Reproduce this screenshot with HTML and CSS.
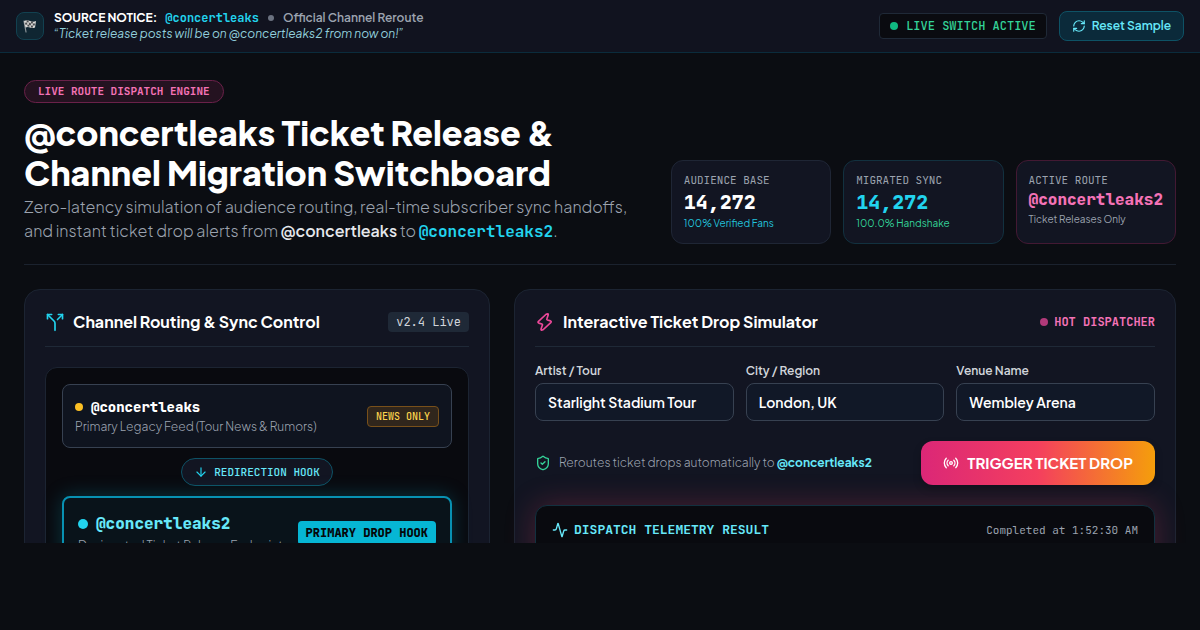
FILE: index.html
```
<!DOCTYPE html>
<html lang="en">
<head>
    <meta charset="UTF-8">
    <meta name="viewport" content="width=device-width, initial-scale=1.0">
    <title>@concertleaks Channel Migration Switchboard</title>
    <link rel="stylesheet" href="styles.css">
</head>
<body>
<div class="app">

    <!-- Source notice bar -->
    <header class="notice">
        <div class="notice-left">
            <div class="notice-icon">
                <svg width="16" height="16" viewBox="0 0 16 16">
                    <path d="M2 3l2 11" stroke="#8b9499" stroke-width="1.2" stroke-linecap="round"/>
                    <path d="M2 3q3-1.500 6 0t6 0l-1 6.500q-3 1-5 0t-4.500 0z" fill="#d9d9d6"/>
                    <path d="M4.500 2.300l2 .2.300 2-2-.2zM9 3.400l2 .2-.2 2-2-.2zM3 4.700l2-.3.400 2-2 .3zM7 4.600l2 .8-.2 2-2-.8zM11 5.500l2-.1-.3 2-2 .1zM5.300 6.500l2 .2.200 2-2-.2zM9 7.500l2 .2-.3 2-1.900-.3z" fill="#4a4d50"/>
                </svg>
            </div>
            <div>
                <p class="notice-title"><strong>SOURCE NOTICE:</strong> <span class="mono handle">@concertleaks</span> <i class="sep"></i> <span class="reroute">Official Channel Reroute</span></p>
                <p class="notice-quote">“Ticket release posts will be on @concertleaks2 from now on!”</p>
            </div>
        </div>
        <div class="notice-right">
            <span class="live-switch mono"><i class="dot green"></i>LIVE SWITCH ACTIVE</span>
            <button type="button" class="reset">
                <svg class="icon" width="14" height="14" viewBox="0 0 24 24"><path d="M3 12a9 9 0 0 1 9-9 9.750 9.750 0 0 1 6.740 2.740L21 8"/><path d="M21 3v5h-5"/><path d="M21 12a9 9 0 0 1-9 9 9.750 9.750 0 0 1-6.740-2.740L3 16"/><path d="M8 16H3v5"/></svg>
                Reset Sample
            </button>
        </div>
    </header>

    <main>
        <!-- Hero -->
        <section class="hero">
            <div class="hero-text">
                <span class="engine mono">LIVE ROUTE DISPATCH ENGINE</span>
                <h1>@concertleaks Ticket Release &amp;<br>Channel Migration Switchboard</h1>
                <p>Zero-latency simulation of audience routing, real-time subscriber sync handoffs,<br>and instant ticket drop alerts from <strong>@concertleaks</strong> to <b class="mono">@concertleaks2</b>.</p>
            </div>
            <div class="stats">
                <div class="stat">
                    <span class="stat-label mono">AUDIENCE BASE</span>
                    <span class="stat-value mono">14,272</span>
                    <span class="stat-note cyan">100% Verified Fans</span>
                </div>
                <div class="stat stat-cyan">
                    <span class="stat-label mono">MIGRATED SYNC</span>
                    <span class="stat-value mono">14,272</span>
                    <span class="stat-note emerald">100.0% Handshake</span>
                </div>
                <div class="stat stat-pink">
                    <span class="stat-label mono">ACTIVE ROUTE</span>
                    <span class="stat-value stat-route mono">@concertleaks2</span>
                    <span class="stat-note">Ticket Releases Only</span>
                </div>
            </div>
        </section>

        <div class="panels">
            <!-- Channel routing -->
            <section class="panel routing">
                <div class="panel-head">
                    <h2>
                        <svg class="icon cyan-icon" width="20" height="20" viewBox="0 0 24 24"><path d="M16 3h5v5"/><path d="M8 3H3v5"/><path d="M12 22v-8.300a4 4 0 0 0-1.172-2.872L3 3"/><path d="m15 9 6-6"/></svg>
                        Channel Routing &amp; Sync Control
                    </h2>
                    <span class="version mono">v2.4 Live</span>
                </div>
                <div class="flow">
                    <div class="node">
                        <div>
                            <div class="node-name mono"><i class="dot amber"></i>@concertleaks</div>
                            <div class="node-desc">Primary Legacy Feed (Tour News &amp; Rumors)</div>
                        </div>
                        <span class="tag-news mono">NEWS ONLY</span>
                    </div>
                    <div class="hook mono">
                        <svg class="icon" width="14" height="14" viewBox="0 0 24 24"><path d="M12 5v14"/><path d="m19 12-7 7-7-7"/></svg>
                        REDIRECTION HOOK
                    </div>
                    <div class="node node-primary">
                        <div>
                            <div class="node-name mono"><i class="dot"></i>@concertleaks2</div>
                            <div class="node-desc">Designated Ticket Release Endpoint</div>
                        </div>
                        <span class="tag-primary mono">PRIMARY DROP HOOK</span>
                    </div>
                </div>
            </section>

            <!-- Ticket drop simulator -->
            <section class="panel simulator">
                <div class="panel-head">
                    <h2>
                        <svg class="icon pink-icon" width="20" height="20" viewBox="0 0 24 24"><path d="M13.300 2.700L4.200 11.200Q2.900 12.500 4.600 13.300L8.200 14.400Q9.300 14.900 8.800 16L7.200 20.600Q7 22.500 9.700 21.300L18.900 12.800Q20.200 11.500 18.500 10.700L14.900 9.600Q13.800 9.100 14.300 8L15.900 3.400Q16.100 1.500 13.300 2.700z"/></svg>
                        Interactive Ticket Drop Simulator
                    </h2>
                    <span class="hot mono"><i class="dot"></i>HOT DISPATCHER</span>
                </div>
                <form id="dropForm" action="#">
                    <div class="fields">
                        <div class="field">
                            <label for="artist">Artist / Tour</label>
                            <input type="text" id="artist" name="artist" value="Starlight Stadium Tour">
                        </div>
                        <div class="field">
                            <label for="city">City / Region</label>
                            <input type="text" id="city" name="city" value="London, UK">
                        </div>
                        <div class="field">
                            <label for="venue">Venue Name</label>
                            <input type="text" id="venue" name="venue" value="Wembley Arena">
                        </div>
                    </div>
                    <div class="dispatch">
                        <p>
                            <svg class="icon" width="16" height="16" viewBox="0 0 24 24"><path d="M20 13c0 5-3.500 7.500-7.660 8.950a1 1 0 0 1-.670-.010C7.500 20.500 4 18 4 13V6a1 1 0 0 1 1-1c2 0 4.500-1.200 6.240-2.720a1.170 1.170 0 0 1 1.520 0C14.510 3.810 17 5 19 5a1 1 0 0 1 1 1z"/><path d="m9 12 2 2 4-4"/></svg>
                            <span>Reroutes ticket drops automatically to <strong>@concertleaks2</strong></span>
                        </p>
                        <button type="submit" class="trigger">
                            <svg class="icon" width="16" height="16" viewBox="0 0 24 24"><path d="M4.900 19.100C1 15.200 1 8.800 4.900 4.900"/><path d="M7.800 16.200c-2.300-2.300-2.300-6.100 0-8.500"/><circle cx="12" cy="12" r="2"/><path d="M16.200 7.800c2.300 2.300 2.300 6.100 0 8.500"/><path d="M19.100 4.900C23 8.800 23 15.100 19.100 19"/></svg>
                            TRIGGER TICKET DROP
                        </button>
                    </div>
                </form>
                <div class="telemetry mono">
                    <h3>
                        <svg class="icon" width="16" height="16" viewBox="0 0 24 24"><path d="M22 12h-2.480a2 2 0 0 0-1.930 1.460l-2.350 8.360a.25.25 0 0 1-.480 0L9.240 2.180a.25.25 0 0 0-.480 0l-2.350 8.360A2 2 0 0 1 4.490 12H2"/></svg>
                        DISPATCH TELEMETRY RESULT
                    </h3>
                    <span>Completed at 1:52:30 AM</span>
                </div>
            </section>
        </div>
    </main>

</div>
</body>
</html>
```
FILE: styles.css
```
* {
    box-sizing: border-box;
}

body, h1, h2, h3, p {
    margin: 0;
}

body {
    font-family: "Plus Jakarta Sans", Inter, sans-serif;
    font-size: 14px;
    line-height: 20px;
    color: #f3f4f6;
    background-color: #0b0d12;
}

.app {
    max-height: calc(100vh - 87px);
    overflow: hidden;
}

.mono {
    font-family: "JetBrains Mono", "DejaVu Sans Mono", monospace;
}

.icon {
    flex: none;
    fill: none;
    stroke: currentColor;
    stroke-width: 2;
    stroke-linecap: round;
    stroke-linejoin: round;
}

.dot {
    flex: none;
    width: 8px;
    height: 8px;
    border-radius: 50%;
    background-color: #22d3ee;
}

.dot.green {
    background-color: #10b981;
}

.dot.amber {
    background-color: #fbbf24;
}

/* Notice bar */
.notice {
    display: flex;
    justify-content: space-between;
    align-items: center;
    padding: 10px 16px;
    background-color: #11131f;
    border-bottom: 1px solid #0b2c3c;
}

.notice-left, .notice-right {
    display: flex;
    align-items: center;
    gap: 10px;
}

.notice-right {
    gap: 12px;
}

.notice-icon {
    display: flex;
    align-items: center;
    justify-content: center;
    width: 28px;
    height: 28px;
    border: 1px solid #124150;
    border-radius: 8px;
    background-color: #0f2632;
}

.notice-title {
    display: flex;
    align-items: center;
    gap: 8px;
    font-size: 12px;
    line-height: 16px;
}

.notice-title strong {
    color: #fff;
}

.handle {
    font-weight: 700;
    color: #22d3ee;
}

.sep {
    width: 6px;
    height: 6px;
    margin: 0 1px;
    border-radius: 50%;
    background-color: #6b7280;
}

.reroute {
    font-weight: 600;
    color: #9ca3af;
}

.notice-quote {
    font-size: 12px;
    line-height: 16px;
    font-style: italic;
    color: #91cfdc;
}

.live-switch {
    display: flex;
    align-items: center;
    gap: 8px;
    padding: 4px 10px;
    font-size: 12px;
    line-height: 16px;
    font-weight: 500;
    color: #34d399;
    background-color: #0a0b10;
    border: 1px solid #1f2937;
    border-radius: 4px;
}

.reset {
    display: flex;
    align-items: center;
    gap: 6px;
    padding: 6px 12px;
    font-family: inherit;
    font-size: 12px;
    line-height: 16px;
    font-weight: 600;
    color: #67e8f9;
    background-color: #0b2a3a;
    border: 1px solid #0e5265;
    border-radius: 8px;
}

/* Hero */
main {
    padding: 27px 24px;
}

.hero {
    display: flex;
    justify-content: space-between;
    align-items: flex-end;
    padding-bottom: 20px;
    border-bottom: 1px solid #1b222e;
}

.engine {
    display: block;
    width: fit-content;
    padding: 3px 13px;
    font-size: 11px;
    line-height: 15px;
    font-weight: 700;
    color: #f472b6;
    background-color: #241220;
    border: 1px solid #6a2149;
    border-radius: 12px;
}

h1 {
    margin-top: 10px;
    font-size: 34px;
    line-height: 40px;
    font-weight: 800;
    color: #fff;
}

.hero-text p {
    margin-top: 2px;
    font-size: 16px;
    line-height: 24px;
    font-weight: 300;
    color: #9ca3af;
}

.hero-text strong {
    font-weight: 600;
    color: #e5e7eb;
}

.hero-text b {
    font-weight: 700;
    color: #22d3ee;
}

.stats {
    display: grid;
    grid-template-columns: repeat(3, 1fr);
    gap: 12px;
}

.stat {
    display: flex;
    flex-direction: column;
    padding: 12px;
    background-color: #121522;
    border: 1px solid #1f2635;
    border-radius: 12px;
}

.stat-cyan {
    border-color: #12313f;
}

.stat-pink {
    border-color: #431933;
}

.stat-label {
    font-size: 11px;
    line-height: 15px;
    color: #9ca3af;
}

.stat-value {
    font-size: 20px;
    line-height: 28px;
    font-weight: 800;
    color: #fff;
}

.stat-cyan .stat-value {
    color: #22d3ee;
}

.stat-pink .stat-route {
    font-size: 16px;
    line-height: 24px;
    color: #f472b6;
}

.stat-note {
    font-size: 10px;
    line-height: 15px;
    color: #9ca3af;
}

.stat-note.cyan {
    color: #22c3dc;
}

.stat-note.emerald {
    color: #34d399;
}

/* Panels */
.panels {
    display: grid;
    grid-template-columns: repeat(12, 1fr);
    gap: 24px;
    margin-top: 24px;
}

.panel {
    padding: 20px;
    background-color: #121522;
    border: 1px solid #1c2432;
    border-radius: 16px;
}

.routing {
    grid-column: span 5;
}

.simulator {
    grid-column: span 7;
}

.panel-head {
    display: flex;
    justify-content: space-between;
    align-items: center;
    padding-bottom: 12px;
    border-bottom: 1px solid #1f2937;
}

h2 {
    display: flex;
    align-items: center;
    gap: 8px;
    font-size: 16px;
    line-height: 24px;
    font-weight: 700;
    color: #fff;
}

.cyan-icon {
    color: #22d3ee;
}

.pink-icon {
    color: #ec4899;
}

.version {
    padding: 2px 8px;
    font-size: 12px;
    line-height: 16px;
    color: #d1d5db;
    background-color: #1f2937;
    border-radius: 4px;
}

.flow {
    margin-top: 20px;
    padding: 16px;
    background-color: #090a0f;
    border: 1px solid #1c2432;
    border-radius: 12px;
}

.node {
    display: flex;
    justify-content: space-between;
    align-items: center;
    padding: 12px;
    background-color: #0f141f;
    border: 1px solid #374151;
    border-radius: 8px;
}

.node-name {
    display: flex;
    align-items: center;
    gap: 8px;
    font-size: 14px;
    line-height: 20px;
    font-weight: 800;
    color: #fff;
}

.node-desc {
    margin-top: 2px;
    font-size: 12px;
    line-height: 16px;
    font-weight: 300;
    color: #9ca3af;
}

.tag-news {
    padding: 2px 8px;
    font-size: 10px;
    line-height: 15px;
    font-weight: 500;
    color: #fcd34d;
    background-color: #30261c;
    border: 1px solid #78501a;
    border-radius: 4px;
}

.hook {
    display: flex;
    align-items: center;
    gap: 6px;
    width: fit-content;
    margin: 10px auto;
    padding: 5px 12px;
    font-size: 11px;
    line-height: 16px;
    font-weight: 500;
    color: #67e8f9;
    background-color: #121522;
    border: 1px solid #0e5265;
    border-radius: 14px;
}

.hook .icon {
    color: #22d3ee;
}

.node-primary {
    padding: 14px;
    background-color: #09131a;
    border: 2px solid #0891b2;
    box-shadow: 0 0 20px rgba(6, 182, 212, 0.25);
}

.node-primary .node-name {
    font-size: 16px;
    line-height: 24px;
    color: #67e8f9;
}

.node-primary .dot {
    width: 10px;
    height: 10px;
}

.tag-primary {
    padding: 4px 8px;
    font-size: 12px;
    line-height: 16px;
    font-weight: 800;
    color: #05070a;
    background-color: #06b6d4;
    border-radius: 4px;
}

/* Simulator */
.hot {
    display: flex;
    align-items: center;
    gap: 6px;
    font-size: 12px;
    font-weight: 700;
    color: #f472b6;
}

.hot .dot {
    background-color: #b13a7a;
}

.fields {
    display: grid;
    grid-template-columns: repeat(3, 1fr);
    gap: 12px;
    margin-top: 16px;
}

.field {
    display: flex;
    flex-direction: column;
    gap: 4px;
}

label {
    font-size: 12px;
    line-height: 16px;
    font-weight: 600;
    color: #d1d5db;
}

input {
    width: 100%;
    min-width: 0;
    padding: 8px 12px;
    font-family: inherit;
    font-size: 14px;
    line-height: 20px;
    font-weight: 600;
    color: #fff;
    background-color: #111827;
    border: 1px solid #374151;
    border-radius: 8px;
}

input:focus {
    border-color: #22d3ee;
    outline: none;
}

.dispatch {
    display: flex;
    justify-content: space-between;
    align-items: center;
    margin-top: 20px;
}

.dispatch p {
    display: flex;
    align-items: center;
    gap: 8px;
    font-size: 12px;
    font-weight: 300;
    color: #9ca3af;
}

.dispatch p .icon {
    color: #34d399;
}

.dispatch strong {
    font-weight: 700;
    color: #67e8f9;
}

.trigger {
    display: flex;
    align-items: center;
    gap: 8px;
    padding: 12px 22px;
    font-family: inherit;
    font-size: 15px;
    line-height: 20px;
    font-weight: 700;
    color: #fff;
    background: linear-gradient(to right, #db2777, #f43f5e, #f59e0b);
    border: none;
    border-radius: 12px;
    box-shadow: 0 4px 8px rgba(0, 0, 0, 0.2);
}

.telemetry {
    display: flex;
    justify-content: space-between;
    align-items: flex-start;
    min-height: 160px;
    margin-top: 20px;
    padding: 16px;
    font-size: 11px;
    line-height: 16px;
    color: #9ca3af;
    background-color: #090a0f;
    border: 1px solid #12313f;
    border-radius: 12px;
    box-shadow: 0 0 30px rgba(244, 63, 94, 0.25);
}

h3 {
    display: flex;
    align-items: center;
    gap: 6px;
    font-size: 13px;
    line-height: 16px;
    color: #67e8f9;
}
```
